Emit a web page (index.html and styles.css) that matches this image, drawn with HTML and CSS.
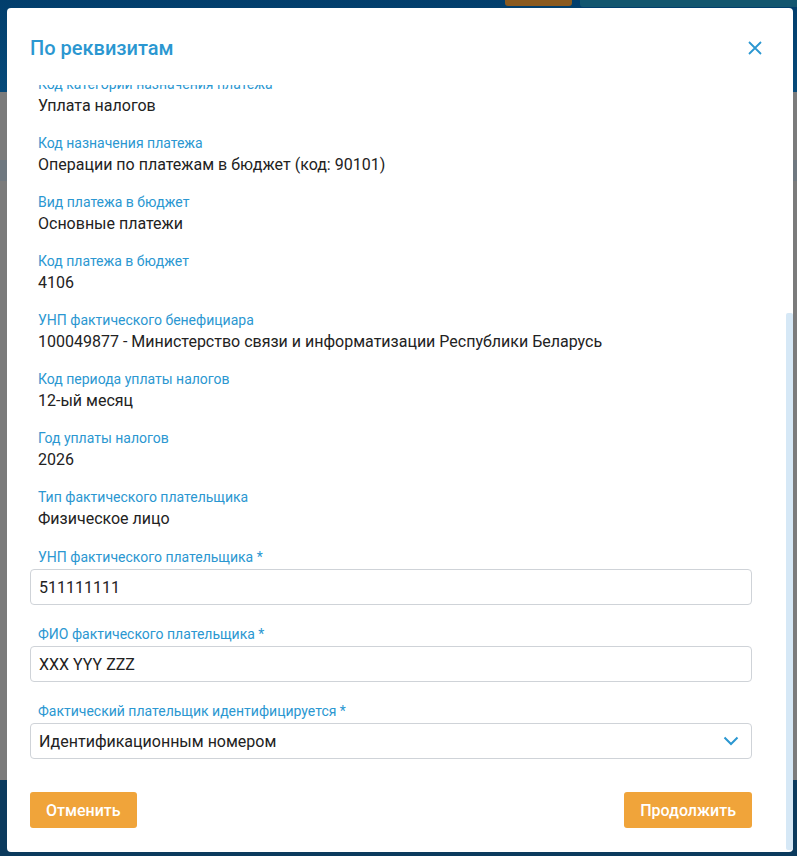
FILE: index.html
```html
<!DOCTYPE html>
<html lang="ru">
<head>
    <meta charset="UTF-8">
    <meta name="viewport" content="width=device-width, initial-scale=1.0">
    <title>По реквизитам</title>
    <link rel="stylesheet" href="styles.css">
</head>
<body>

    <div class="page">
        <div class="page-header">
            <div class="header-btn"></div>
            <div class="header-panel"></div>
        </div>
        <div class="page-main">
            <div class="main-band"></div>
        </div>
        <div class="page-footer"></div>
    </div>

    <div class="modal">
        <div class="modal-header">
            <h2 class="modal-title">По реквизитам</h2>
            <button class="modal-close" type="button" aria-label="Закрыть">
                <svg width="14" height="14" viewBox="0 0 14 14">
                    <path d="M1 1L13 13M13 1L1 13" stroke="#2b97d1" stroke-width="1.8" fill="none"/>
                </svg>
            </button>
        </div>

        <div class="modal-body">
            <div class="details">
                <div class="detail">
                    <div class="detail-label">Код категории назначения платежа</div>
                    <div class="detail-value">Уплата налогов</div>
                </div>
                <div class="detail">
                    <div class="detail-label">Код назначения платежа</div>
                    <div class="detail-value">Операции по платежам в бюджет (код: 90101)</div>
                </div>
                <div class="detail">
                    <div class="detail-label">Вид платежа в бюджет</div>
                    <div class="detail-value">Основные платежи</div>
                </div>
                <div class="detail">
                    <div class="detail-label">Код платежа в бюджет</div>
                    <div class="detail-value">4106</div>
                </div>
                <div class="detail">
                    <div class="detail-label">УНП фактического бенефициара</div>
                    <div class="detail-value">100049877 - Министерство связи и информатизации Республики Беларусь</div>
                </div>
                <div class="detail">
                    <div class="detail-label">Код периода уплаты налогов</div>
                    <div class="detail-value">12-ый месяц</div>
                </div>
                <div class="detail">
                    <div class="detail-label">Год уплаты налогов</div>
                    <div class="detail-value">2026</div>
                </div>
                <div class="detail">
                    <div class="detail-label">Тип фактического плательщика</div>
                    <div class="detail-value">Физическое лицо</div>
                </div>
            </div>

            <div class="form">
                <div class="field">
                    <label class="field-label">УНП фактического плательщика *</label>
                    <div class="field-input">511111111</div>
                </div>
                <div class="field">
                    <label class="field-label">ФИО фактического плательщика *</label>
                    <div class="field-input">XXX YYY ZZZ</div>
                </div>
                <div class="field">
                    <label class="field-label">Фактический плательщик идентифицируется *</label>
                    <div class="field-input field-select">
                        <span>Идентификационным номером</span>
                        <svg width="16" height="10" viewBox="0 0 16 10">
                            <path d="M1.5 1.5L8 8L14.5 1.5" stroke="#2b97d1" stroke-width="2" fill="none"/>
                        </svg>
                    </div>
                </div>
            </div>
        </div>

        <div class="modal-footer">
            <button class="btn" type="button">Отменить</button>
            <button class="btn" type="button">Продолжить</button>
        </div>

        <div class="modal-scroll"></div>
    </div>

</body>
</html>
```

FILE: styles.css
```css
body, html {
    margin: 0;
    padding: 0;
    height: 100%;
    overflow: hidden;
    font-family: Roboto, "Liberation Sans", Arial, sans-serif;
}

.page {
    display: flex;
    flex-direction: column;
    height: 100%;
}

.page-header {
    height: 92px;
    background: linear-gradient(180deg, #023e6c 0%, #064a7a 100%);
    display: flex;
    align-items: flex-start;
    padding-left: 505px;
}

.header-btn {
    width: 67px;
    height: 6px;
    background: #8a5a20;
    border-radius: 0 0 3px 3px;
}

.header-panel {
    flex: 1;
    height: 7px;
    margin-left: 8px;
    background: #13566f;
    border-radius: 0 0 0 3px;
}

.page-main {
    flex: 1;
    background: #7b7b7b;
    padding-top: 68px;
}

.main-band {
    height: 21px;
    background: #6f7880;
}

.page-footer {
    height: 76px;
    background: #0b3a5d;
}

.modal {
    position: absolute;
    left: 7px;
    top: 8px;
    width: 786px;
    height: 844px;
    background: #fff;
    border-radius: 4px;
    display: flex;
    flex-direction: column;
    overflow: hidden;
}

.modal-header {
    display: flex;
    align-items: center;
    justify-content: space-between;
    padding: 28px 31px 25px 23px;
}

.modal-title {
    margin: 0;
    font-size: 20px;
    line-height: 24px;
    font-weight: 500;
    color: #2b97d1;
}

.modal-close {
    border: none;
    background: none;
    padding: 0;
    width: 14px;
    height: 14px;
    display: flex;
}

.modal-body {
    flex: 1;
    overflow: hidden;
    padding: 0 41px 0 23px;
}

.details {
    margin-top: -11px;
    padding-left: 8px;
}

.detail {
    margin-bottom: 15px;
}

.detail-label,
.field-label {
    display: block;
    font-size: 14px;
    line-height: 20px;
    color: #2b97d1;
}

.detail-value {
    font-size: 16px;
    line-height: 24px;
    color: #222;
}

.form {
    margin-top: 16px;
}

.field {
    margin-bottom: 19px;
}

.field-label {
    padding-left: 8px;
    margin-bottom: 2px;
}

.field-input {
    height: 36px;
    box-sizing: border-box;
    border: 1px solid #cfd3d8;
    border-radius: 4px;
    padding: 0 12px 0 8px;
    display: flex;
    align-items: center;
    font-size: 16px;
    color: #222;
}

.field-select {
    justify-content: space-between;
}

.modal-footer {
    display: flex;
    justify-content: space-between;
    padding: 20px 41px 24px 23px;
}

.btn {
    height: 36px;
    padding: 0 16px;
    border: none;
    border-radius: 3px;
    background: #f0a43a;
    color: #fff;
    font-family: Roboto, "Liberation Sans", Arial, sans-serif;
    font-size: 16px;
    font-weight: 500;
}

.modal-scroll {
    position: absolute;
    right: 0;
    top: 305px;
    bottom: 2px;
    width: 7px;
    background: #d6e8f6;
    border-radius: 2px;
}
```
